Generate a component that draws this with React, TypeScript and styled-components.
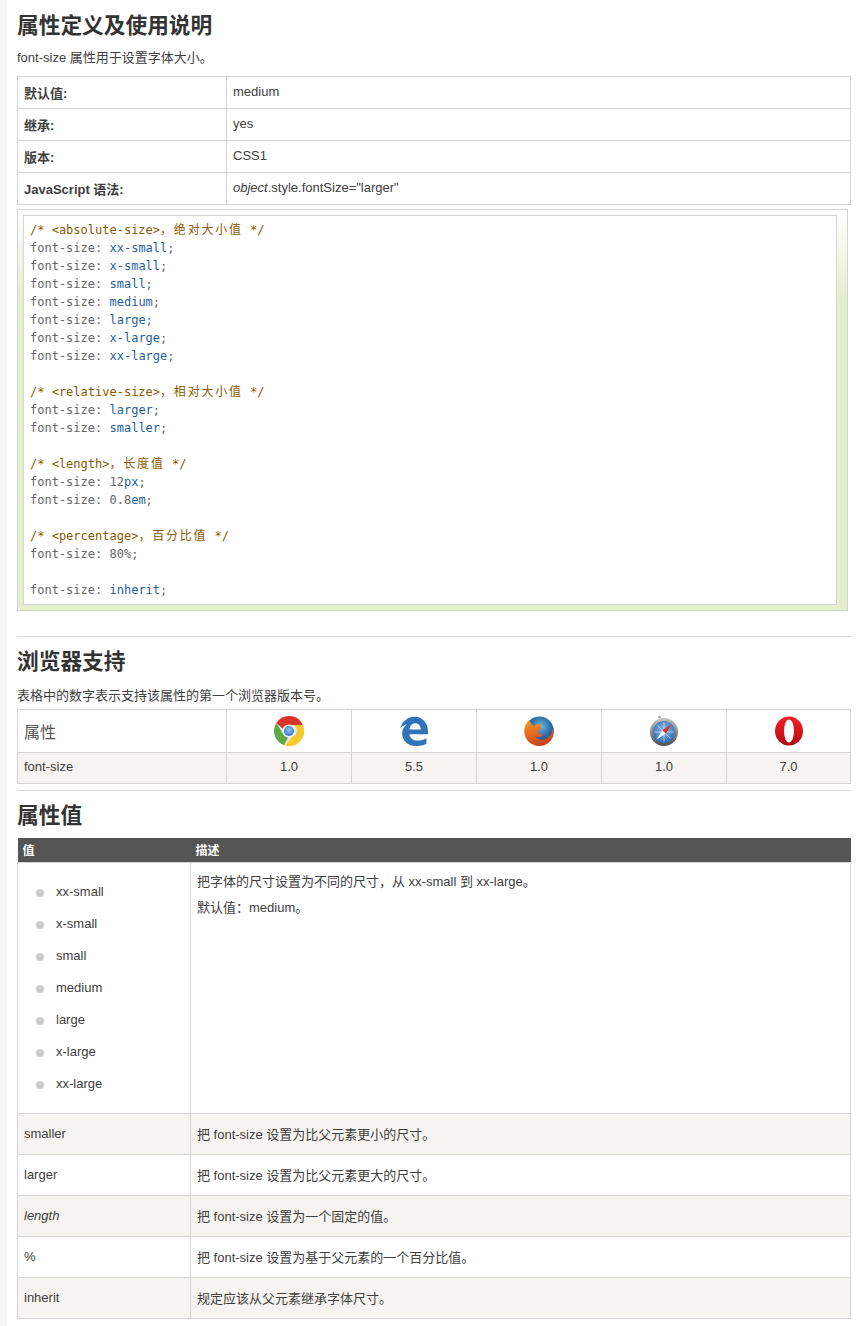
import React from "react";
import styled, { createGlobalStyle } from "styled-components";

const Global = createGlobalStyle`
  html, body { margin: 0; padding: 0; background: #fff; }
  body { font-family: "Liberation Sans", "Noto Sans CJK SC", sans-serif; font-size: 13px; color: #404040; }
`;

const Page = styled.div`
  box-sizing: border-box;
  width: 859px;
  height: 1326px;
  overflow: hidden;
  border-left: 7px solid #f6f6f6;
  padding: 0 8px 0 10px;
`;

const Heading = styled.h2<{ $top: number }>`
  margin: ${(p) => p.$top}px 0 0;
  font-size: 21.7px;
  line-height: 30px;
  font-weight: 700;
  color: #333;
`;

const Lead = styled.p<{ $top: number }>`
  margin: ${(p) => p.$top}px 0 0;
  font-size: 13px;
  line-height: 18px;
  color: #404040;
`;

const Rule = styled.hr<{ $top: number }>`
  margin: ${(p) => p.$top}px 0 0;
  border: 0;
  border-top: 1px solid #d8d8d8;
  height: 0;
`;

const Table = styled.table<{ $top: number }>`
  box-sizing: border-box;
  margin-top: ${(p) => p.$top}px;
  width: 833px;
  table-layout: fixed;
  border-collapse: collapse;
  font-size: 13px;
  color: #404040;
`;

const Col = styled.col<{ $w: number }>`
  width: ${(p) => p.$w}px;
`;

const Row = styled.tr<{ $h: number; $shade?: boolean }>`
  height: ${(p) => p.$h}px;
  background: ${(p) => (p.$shade ? "#f5f4f0" : "#fff")};
`;

const Cell = styled.td<{ $center?: boolean; $raise?: boolean; $italic?: boolean }>`
  box-sizing: border-box;
  border: 1px solid #d4d4d4;
  padding: ${(p) => (p.$raise ? "0 6px 3px" : "0 6px")};
  text-align: ${(p) => (p.$center ? "center" : "left")};
  font-style: ${(p) => (p.$italic ? "italic" : "normal")};
  vertical-align: middle;
`;

const LabelCell = styled(Cell)`
  font-weight: 700;
`;

const PropHead = styled(Cell)`
  font-size: 16px;
  color: #555;
`;

const IconCell = styled(Cell)`
  padding: 0;
  text-align: center;
  line-height: 0;
  svg { display: inline-block; vertical-align: middle; }
`;

const CodeOuter = styled.div`
  box-sizing: border-box;
  margin-top: 4px;
  width: 831px;
  height: 402px;
  padding: 5px 10px 5px 5px;
  border: 1px solid #d4d4d4;
  border-bottom-color: #cfd6b8;
  background: linear-gradient(#fff 0, #e5eecc 22%, #e5eecc 100%);
`;

const CodeInner = styled.pre`
  box-sizing: border-box;
  margin: 0;
  height: 390px;
  padding: 5px 6px;
  background: #fff;
  border: 1px solid #d4d4d4;
  font-family: "DejaVu Sans Mono", "Noto Sans CJK SC", monospace;
  font-size: 12px;
  line-height: 18px;
  color: #666;
`;

const Comment = styled.span`
  color: #8a5a00;
`;

const Wide = styled.span`
  letter-spacing: 1.8px;
`;

const Keyword = styled.span`
  color: #1f5f9f;
`;

const HeadRow = styled.tr`
  height: 24px;
  background: #555;
`;

const HeadCell = styled.th`
  box-sizing: border-box;
  padding: 0 5px;
  border: 0;
  font-size: 12px;
  font-weight: 700;
  color: #fff;
  text-align: left;
`;

const TopCell = styled(Cell)`
  vertical-align: top;
`;

const ValueList = styled.ul`
  margin: 13px 0 0;
  padding: 0 0 0 32px;
  list-style: none;
`;

const ValueItem = styled.li`
  position: relative;
  height: 32px;
  line-height: 32px;
  &::before {
    content: "";
    position: absolute;
    left: -20px;
    top: 13px;
    width: 8px;
    height: 8px;
    border-radius: 50%;
    background: #ccc;
  }
`;

const DescLine = styled.p`
  margin: 0;
  line-height: 26px;
  &:first-child { margin-top: 6px; }
`;

const Chrome = () => (
  <svg width="32" height="32" viewBox="0 0 32 32">
    <defs>
      <radialGradient id="cb" cx="50%" cy="40%" r="60%">
        <stop offset="0" stopColor="#9cc6ee" />
        <stop offset="1" stopColor="#2f74c8" />
      </radialGradient>
    </defs>
    <circle cx="16" cy="16" r="15" fill="#e8e8e8" />
    <path d="M3.4 8A15 15 0 0 1 29.8 10H16A6.2 6.2 0 0 0 10 14Z" fill="#d9342b" />
    <path d="M3.4 8L10.2 19A6.6 6.6 0 0 0 15 22.4L11.2 30.2A15 15 0 0 1 3.4 8Z" fill="#5eaa44" />
    <path d="M29.8 10A15 15 0 0 1 12 30.5L19.5 21.5A6.5 6.5 0 0 0 21 10Z" fill="#f3cb2f" />
    <circle cx="16" cy="16" r="6.6" fill="#f2f2f2" />
    <circle cx="16" cy="16" r="5" fill="url(#cb)" />
  </svg>
);

const Edge = () => (
  <svg width="30" height="32" viewBox="0 0 30 32">
    <path
      d="M1.2 13.6C3 6.2 9 1.8 15.4 1.8 23.6 1.8 29 8 29 16.6V19.2H10.4C11 23.4 14.4 25.6 18.6 25.6 21.8 25.6 24.6 24.8 27.4 23.2V28.8C24.8 30.2 21.4 31 17.6 31 8.8 31 3.2 25.6 3.2 18.4 3.2 14.6 5 11.4 8 9 5.6 9.8 3 11.4 1.2 13.6ZM10.4 14.4H21.8C21.8 10.8 19.6 8.2 16.2 8.2 13.2 8.2 11 10.6 10.4 14.4Z"
      fill="#2f74b8"
      fillRule="evenodd"
    />
  </svg>
);

const Firefox = () => (
  <svg width="32" height="32" viewBox="0 0 32 32">
    <defs>
      <radialGradient id="fg" cx="55%" cy="35%" r="60%">
        <stop offset="0" stopColor="#6fb7dc" />
        <stop offset="0.6" stopColor="#2a6ca8" />
        <stop offset="1" stopColor="#173f78" />
      </radialGradient>
      <linearGradient id="fo" x1="0" y1="0" x2="0.4" y2="1">
        <stop offset="0" stopColor="#f0a020" />
        <stop offset="0.6" stopColor="#e4661c" />
        <stop offset="1" stopColor="#c8441a" />
      </linearGradient>
    </defs>
    <circle cx="16.5" cy="15.5" r="14" fill="url(#fg)" />
    <path
      d="M6 5C3 8 1.2 12 1.2 16 1.2 24.5 8 31 16.2 31 24.5 31 31 24.5 31 16.2 31 14.5 30.7 13 30.2 11.5 30 16 28 21 23.5 23.5 20 25.4 14.5 25 12.5 21.5 15 23 18.5 22 20 19.5 18.5 19.8 14.5 18.5 14.5 15.5 16 15 17.5 14.5 18.5 13.5 16.5 12.5 16.5 10.5 18 8.5 15 8 12.5 9.5 11 11.5 9.5 9.5 8 8.5 7.5 7 7 6.5 6 5 6 5Z"
      fill="url(#fo)"
    />
  </svg>
);

const Safari = () => (
  <svg width="32" height="32" viewBox="0 0 32 32">
    <defs>
      <radialGradient id="sg" cx="50%" cy="40%" r="60%">
        <stop offset="0" stopColor="#8cbbe6" />
        <stop offset="1" stopColor="#2f6cb4" />
      </radialGradient>
      <linearGradient id="sr" x1="0" y1="0" x2="0" y2="1">
        <stop offset="0" stopColor="#c4c4c4" />
        <stop offset="1" stopColor="#4f4f4f" />
      </linearGradient>
    </defs>
    <circle cx="11.5" cy="2.2" r="1.4" fill="#aaa" />
    <circle cx="16" cy="17" r="14" fill="url(#sr)" />
    <circle cx="16" cy="17" r="11" fill="url(#sg)" />
    <path d="M16 7.5V26.5M6.5 17H25.5M9.5 10.5L22.5 23.5M22.5 10.5L9.5 23.5" stroke="#d5e6f5" strokeWidth="0.7" />
    <path d="M23.5 9.5L14.2 15.2 17.8 18.8Z" fill="#d9342b" />
    <path d="M8.5 24.5L14.2 15.2 17.8 18.8Z" fill="#f2f2f2" />
  </svg>
);

const Opera = () => (
  <svg width="32" height="32" viewBox="0 0 32 32">
    <defs>
      <linearGradient id="og" x1="0" y1="0" x2="0" y2="1">
        <stop offset="0" stopColor="#f0242a" />
        <stop offset="0.7" stopColor="#cc0f16" />
        <stop offset="1" stopColor="#9c0c10" />
      </linearGradient>
    </defs>
    <ellipse cx="16" cy="16" rx="14" ry="14.5" fill="url(#og)" />
    <ellipse cx="16" cy="16" rx="5" ry="11.5" fill="#fff" />
  </svg>
);

const simple = ["xx-small", "x-small", "small", "medium", "large", "x-large", "xx-large"];

const Decl = ({ v }: { v: string }) => (
  <>
    {"font-size: "}
    <Keyword>{v}</Keyword>;{"\n"}
  </>
);

const Note = ({ tag, zh }: { tag: string; zh: string }) => (
  <>
    <Comment>
      {`/* <${tag}>`}
      <Wide>，{zh}</Wide>
      {" */"}
    </Comment>
    {"\n"}
  </>
);

const rows: { v: string; d: string; italic?: boolean }[] = [
  { v: "smaller", d: "把 font-size 设置为比父元素更小的尺寸。" },
  { v: "larger", d: "把 font-size 设置为比父元素更大的尺寸。" },
  { v: "length", d: "把 font-size 设置为一个固定的值。", italic: true },
  { v: "%", d: "把 font-size 设置为基于父元素的一个百分比值。" },
  { v: "inherit", d: "规定应该从父元素继承字体尺寸。" },
];

export default function App() {
  return (
    <Page>
      <Global />
      <Heading $top={11}>属性定义及使用说明</Heading>
      <Lead $top={8}>font-size 属性用于设置字体大小。</Lead>
      <Table $top={9}>
        <colgroup>
          <Col $w={209} />
          <Col $w={624} />
        </colgroup>
        <tbody>
          <Row $h={32}>
            <LabelCell>默认值:</LabelCell>
            <Cell $raise>medium</Cell>
          </Row>
          <Row $h={32}>
            <LabelCell>继承:</LabelCell>
            <Cell $raise>yes</Cell>
          </Row>
          <Row $h={32}>
            <LabelCell>版本:</LabelCell>
            <Cell $raise>CSS1</Cell>
          </Row>
          <Row $h={32}>
            <LabelCell>JavaScript 语法:</LabelCell>
            <Cell $raise>
              <i>object</i>.style.fontSize="larger"
            </Cell>
          </Row>
        </tbody>
      </Table>
      <CodeOuter>
        <CodeInner>
          <Note tag="absolute-size" zh="绝对大小值" />
          {simple.map((v) => (
            <Decl key={v} v={v} />
          ))}
          {"\n"}
          <Note tag="relative-size" zh="相对大小值" />
          <Decl v="larger" />
          <Decl v="smaller" />
          {"\n"}
          <Note tag="length" zh="长度值" />
          {"font-size: 12"}
          <Keyword>px</Keyword>;{"\n"}
          {"font-size: 0.8"}
          <Keyword>em</Keyword>;{"\n"}
          {"\n"}
          <Note tag="percentage" zh="百分比值" />
          {"font-size: 80%;\n"}
          {"\n"}
          <Decl v="inherit" />
        </CodeInner>
      </CodeOuter>
      <Rule $top={25} />
      <Heading $top={10}>浏览器支持</Heading>
      <Lead $top={10}>表格中的数字表示支持该属性的第一个浏览器版本号。</Lead>
      <Table $top={4}>
        <colgroup>
          <Col $w={209} />
          <Col $w={125} />
          <Col $w={125} />
          <Col $w={125} />
          <Col $w={125} />
          <Col $w={124} />
        </colgroup>
        <tbody>
          <Row $h={43}>
            <PropHead>属性</PropHead>
            <IconCell><Chrome /></IconCell>
            <IconCell><Edge /></IconCell>
            <IconCell><Firefox /></IconCell>
            <IconCell><Safari /></IconCell>
            <IconCell><Opera /></IconCell>
          </Row>
          <Row $h={31} $shade>
            <Cell $raise>font-size</Cell>
            <Cell $center $raise>1.0</Cell>
            <Cell $center $raise>5.5</Cell>
            <Cell $center $raise>1.0</Cell>
            <Cell $center $raise>1.0</Cell>
            <Cell $center $raise>7.0</Cell>
          </Row>
        </tbody>
      </Table>
      <Rule $top={6} />
      <Heading $top={10}>属性值</Heading>
      <Table $top={7}>
        <colgroup>
          <Col $w={173} />
          <Col $w={660} />
        </colgroup>
        <tbody>
          <HeadRow>
            <HeadCell>值</HeadCell>
            <HeadCell>描述</HeadCell>
          </HeadRow>
          <Row $h={251}>
            <TopCell>
              <ValueList>
                {simple.map((v) => (
                  <ValueItem key={v}>{v}</ValueItem>
                ))}
              </ValueList>
            </TopCell>
            <TopCell>
              <DescLine>把字体的尺寸设置为不同的尺寸，从 xx-small 到 xx-large。</DescLine>
              <DescLine>默认值：medium。</DescLine>
            </TopCell>
          </Row>
          {rows.map((r, i) => (
            <Row key={r.v} $h={41} $shade={i % 2 === 0}>
              <Cell $italic={r.italic}>{r.v}</Cell>
              <Cell>{r.d}</Cell>
            </Row>
          ))}
        </tbody>
      </Table>
    </Page>
  );
}
